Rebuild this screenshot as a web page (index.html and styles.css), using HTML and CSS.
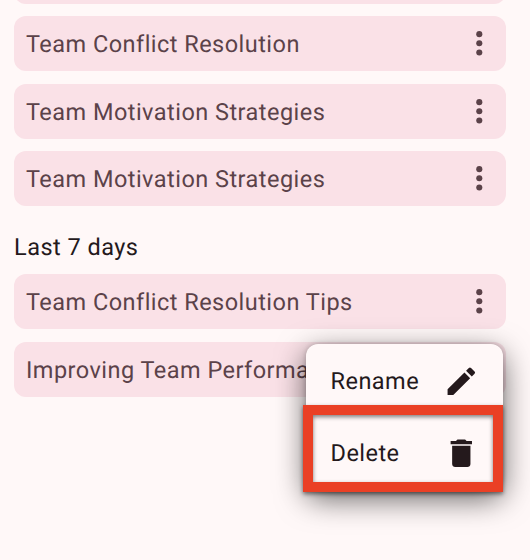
FILE: index.html
```html
<!DOCTYPE html>
<html lang="en">
<head>
    <meta charset="UTF-8">
    <title>Chat History</title>
    <link rel="stylesheet" href="styles.css">
</head>
<body>
    <svg class="sprite">
        <symbol id="more" viewBox="0 0 24 24">
            <circle cx="12" cy="6" r="2"/>
            <circle cx="12" cy="12" r="2"/>
            <circle cx="12" cy="18" r="2"/>
        </symbol>
    </svg>

    <div class="history">
        <div class="chat"></div>
        <div class="chat">
            <span class="title">Team Conflict Resolution</span>
            <svg class="icon"><use href="#more"/></svg>
        </div>
        <div class="chat">
            <span class="title">Team Motivation Strategies</span>
            <svg class="icon"><use href="#more"/></svg>
        </div>
        <div class="chat">
            <span class="title">Team Motivation Strategies</span>
            <svg class="icon"><use href="#more"/></svg>
        </div>
        <h2 class="period">Last 7 days</h2>
        <div class="chat">
            <span class="title">Team Conflict Resolution Tips</span>
            <svg class="icon"><use href="#more"/></svg>
        </div>
        <div class="chat">
            <span class="title">Improving Team Performa</span>
        </div>
    </div>

    <div class="menu">
        <div class="menu-item">
            <span>Rename</span>
            <svg class="icon" viewBox="0 0 24 24"><path d="M3 17.25V21h3.75L17.81 9.94l-3.75-3.75L3 17.25zM20.71 7.04a1 1 0 0 0 0-1.41l-2.34-2.34a1 1 0 0 0-1.41 0l-1.83 1.83 3.75 3.75 1.83-1.83z"/></svg>
        </div>
        <div class="menu-item">
            <span>Delete</span>
            <svg class="icon" viewBox="0 0 24 24"><path d="M6 19c0 1.1.9 2 2 2h8c1.1 0 2-.9 2-2V7H6v12zM19 4h-3.5l-1-1h-5l-1 1H5v2h14V4z"/></svg>
        </div>
        <div class="highlight"></div>
    </div>
</body>
</html>
```

FILE: styles.css
```css
body {
    margin: 0;
    height: 560px;
    overflow: hidden;
    position: relative;
    background-color: #fff8f8;
    color: #24191c;
    font-family: Roboto, sans-serif;
    font-size: 23.5px;
    line-height: 28px;
    letter-spacing: 0.47px;
    text-rendering: geometricPrecision;
}
.sprite {
    display: none;
}
.history {
    display: flex;
    flex-direction: column;
    gap: 12.3px;
    margin-top: -51.6px;
    padding: 0 24px 0 14px;
}
.chat {
    display: flex;
    align-items: center;
    justify-content: space-between;
    box-sizing: border-box;
    height: 55.3px;
    padding: 0 8.7px 0 12px;
    border-radius: 12px;
    background-color: #fae1e7;
    color: #5b4249;
}
.title {
    padding-top: 1px;
    white-space: nowrap;
}
.icon {
    width: 36.6px;
    height: 36.6px;
    flex-shrink: 0;
    fill: currentColor;
}
.chat .icon {
    margin-bottom: 0.6px;
}
.period {
    margin: 0;
    height: 43.1px;
    line-height: 56px;
    font-size: inherit;
    font-weight: 400;
}
.menu {
    position: absolute;
    left: 306px;
    top: 344px;
    width: 197px;
    height: 146px;
    border-radius: 12px;
    background-color: #fff8f8;
    box-shadow: 0 9px 30px rgba(0, 0, 0, 0.6), 0 0 5px rgba(0, 0, 0, 0.2);
}
.menu-item {
    display: flex;
    align-items: center;
    justify-content: space-between;
    height: 72px;
    padding: 0 23.9px 0 24.5px;
}
.menu-item:first-child {
    padding-top: 1px;
}
.highlight {
    position: absolute;
    left: -3px;
    top: 61px;
    width: 180px;
    height: 67px;
    border: 10px solid #ea4025;
    filter: drop-shadow(0 2px 2px rgba(0, 0, 0, 0.5));
}
```
